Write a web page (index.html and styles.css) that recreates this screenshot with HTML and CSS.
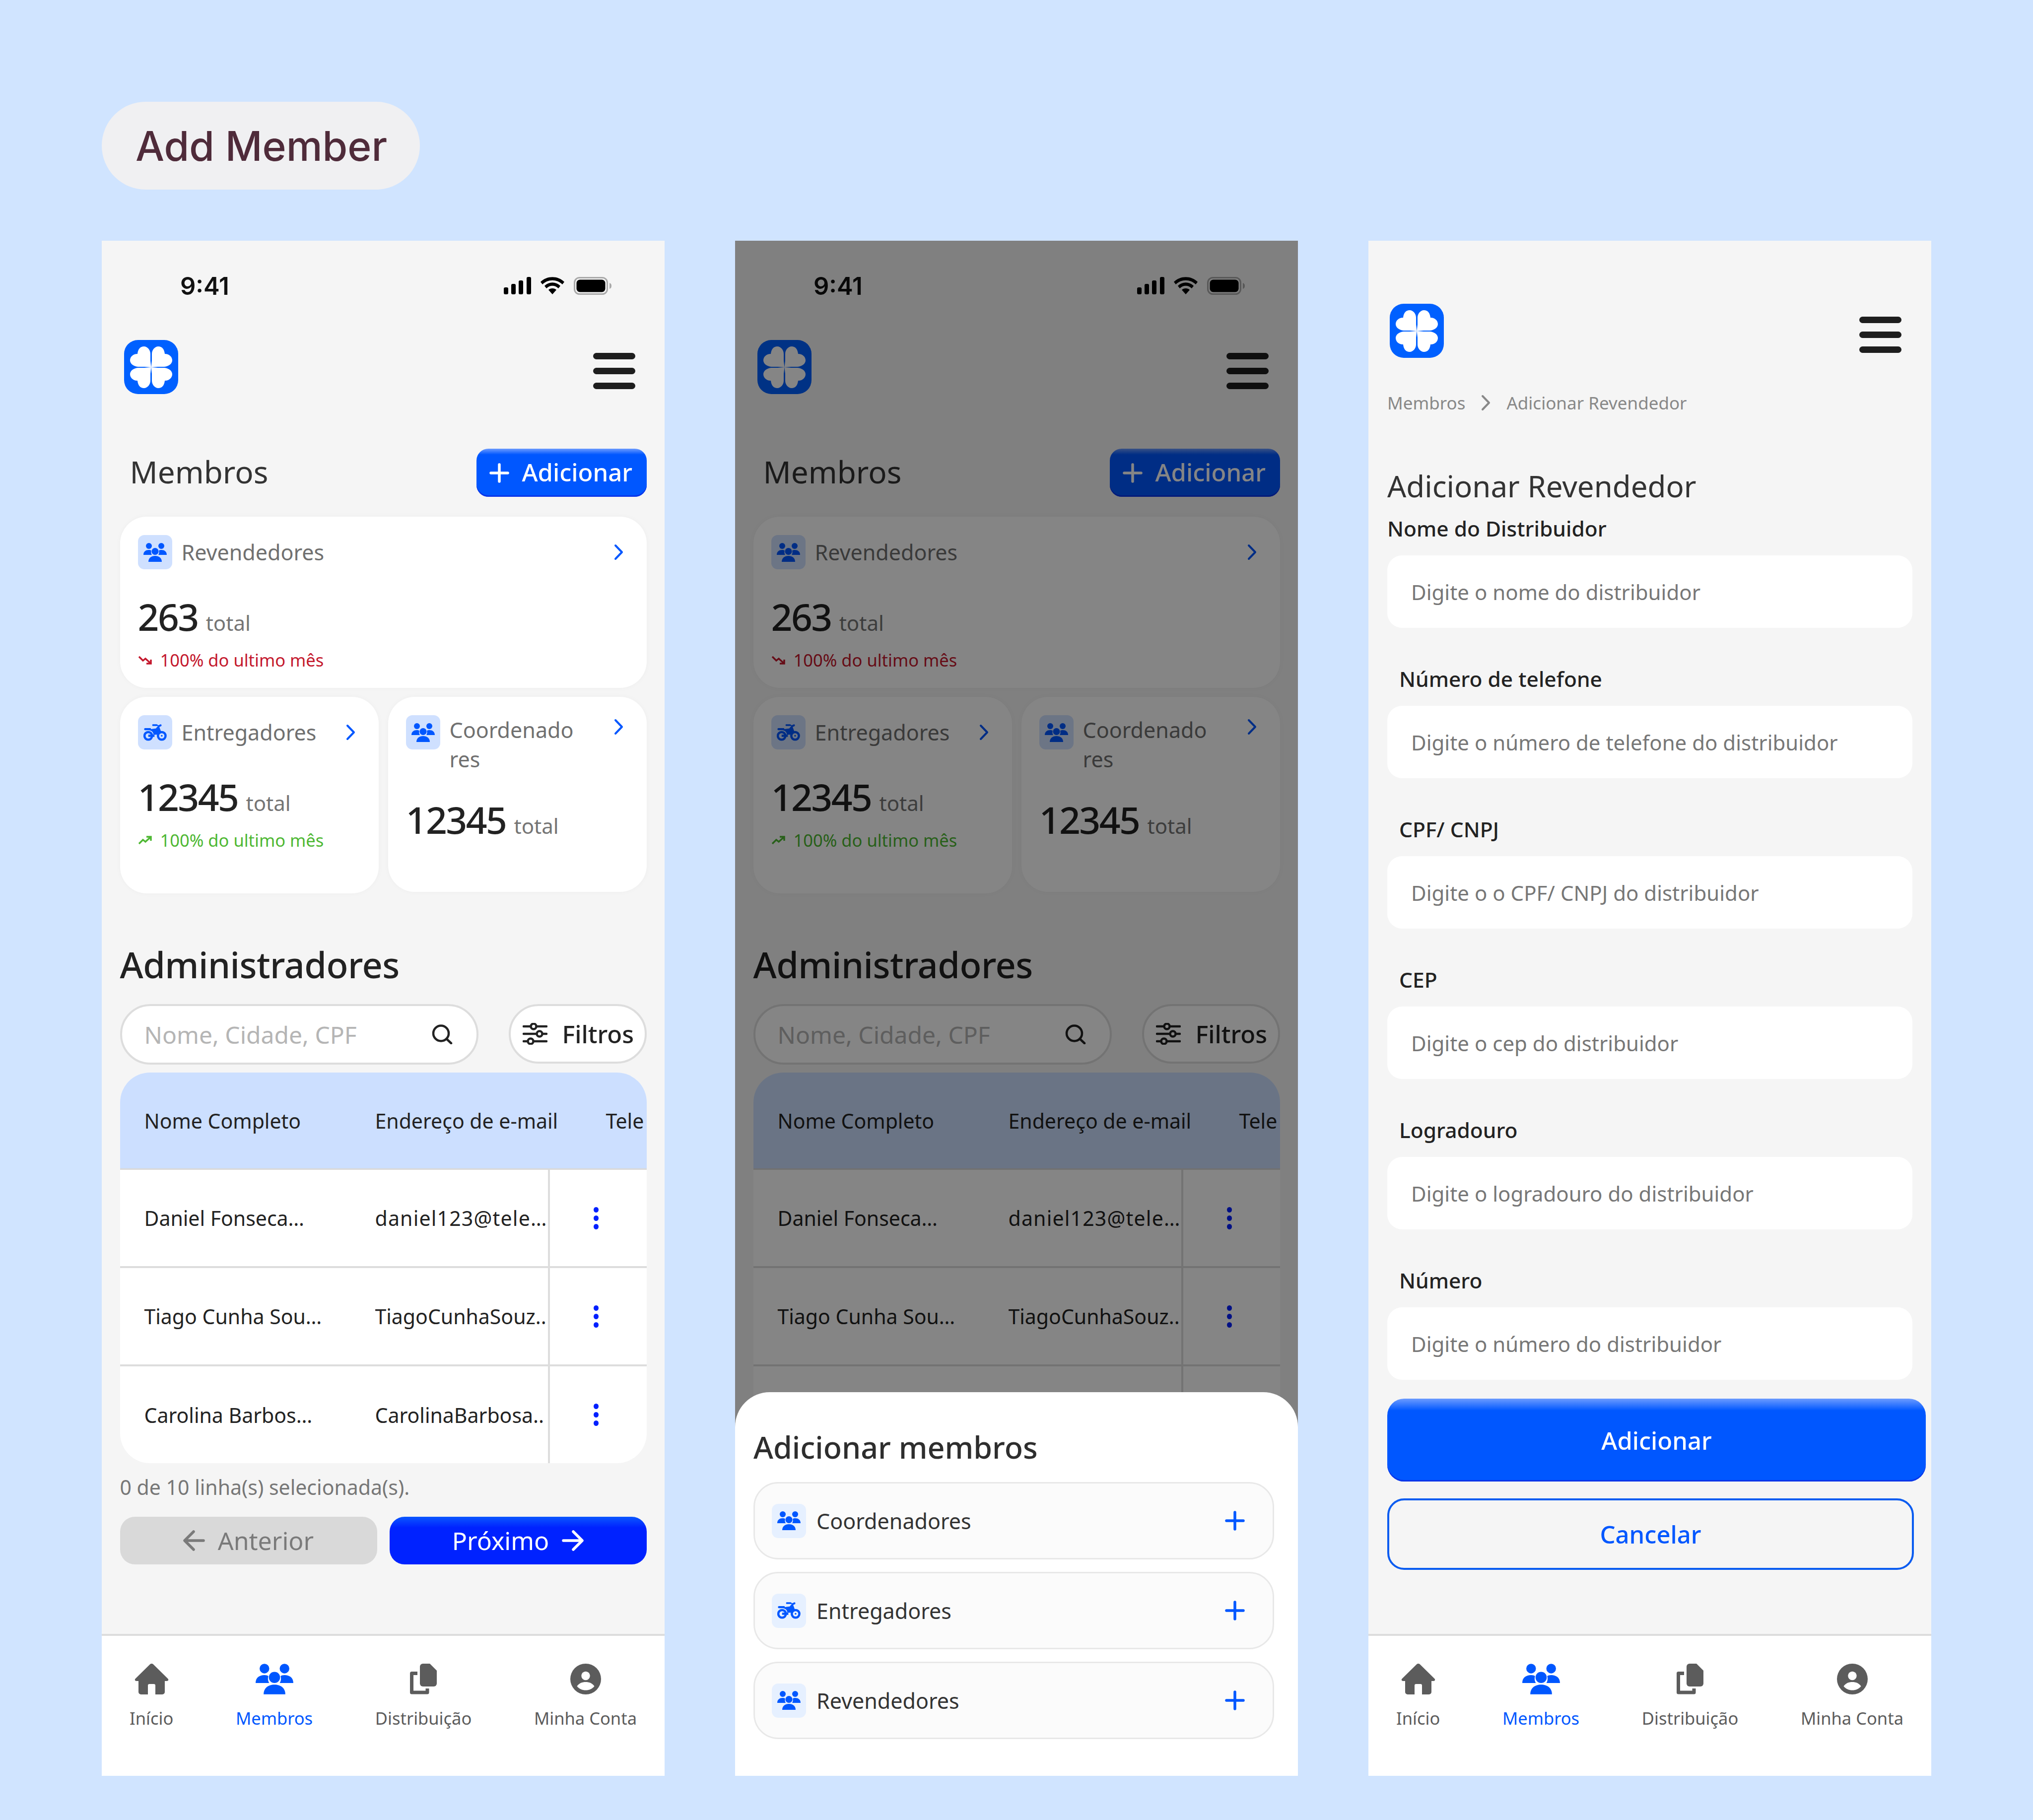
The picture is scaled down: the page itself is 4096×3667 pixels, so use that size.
FILE: index.html
```html
<!DOCTYPE html>
<html>
<head>
	<title>Add Member</title>
	<link rel="stylesheet" href="styles.css">
</head>
<body>
	<svg class="sprite">
		<symbol id="i-logo" viewBox="0 0 109 109">
			<rect width="109" height="109" rx="28" fill="#0060ff"/>
			<g fill="#fff">
				<path d="M54.5 55L53 42C53 36 53 33 53 28C53 20 47 13 40 13C33 13 28 18 27 28C18 28 12 34 12 41C12 48 19 53 28 54L41 54Z"/>
				<path d="M54.5 55L53 42C53 36 53 33 53 28C53 20 47 13 40 13C33 13 28 18 27 28C18 28 12 34 12 41C12 48 19 53 28 54L41 54Z" transform="translate(109 0) scale(-1 1)"/>
				<path d="M54.5 55L53 42C53 36 53 33 53 28C53 20 47 13 40 13C33 13 28 18 27 28C18 28 12 34 12 41C12 48 19 53 28 54L41 54Z" transform="translate(0 110) scale(1 -1)"/>
				<path d="M54.5 55L53 42C53 36 53 33 53 28C53 20 47 13 40 13C33 13 28 18 27 28C18 28 12 34 12 41C12 48 19 53 28 54L41 54Z" transform="translate(109 110) scale(-1 -1)"/>
			</g>
		</symbol>
		<symbol id="i-people" viewBox="0 0 47 38">
			<circle cx="11" cy="6" r="6"/>
			<circle cx="36" cy="6" r="6"/>
			<circle cx="23.500" cy="17" r="7"/>
			<path d="M0 24C0 17 5 14 11 14C13 14 15 14.500 16 15.500C14.800 18 15.500 22 17 24Z"/>
			<path d="M47 24C47 17 42 14 36 14C34 14 32 14.500 31 15.500C32.200 18 31.500 22 30 24Z"/>
			<path d="M10 38C10 30 16 26 23.500 26C31 26 37 30 37 38Z"/>
		</symbol>
		<symbol id="i-moto" viewBox="0 0 135 96">
			<circle cx="28" cy="67" r="22" fill="none" stroke="currentColor" stroke-width="13"/>
			<circle cx="106" cy="67" r="22" fill="none" stroke="currentColor" stroke-width="13"/>
			<circle cx="106" cy="67" r="5"/>
			<path d="M28 60H64V73H28Z"/>
			<path d="M10 22H42L44 28L72 24L84 10H54C50 10 50 0 54 0H76C80 0 83 3 85 6L100 0C104-1 107 9 103 11L92 16L102 42C92 42 84 48 80 60H58C58 44 46 34 30 34H10C2 34 2 22 10 22Z"/>
		</symbol>
		<symbol id="i-chev" viewBox="0 0 19 33">
			<path d="M3 3L16 16.500L3 30" fill="none" stroke="currentColor" stroke-width="4" stroke-linecap="round" stroke-linejoin="round"/>
		</symbol>
		<symbol id="i-plus" viewBox="0 0 40 40">
			<path d="M20 3V37M3 20H37" fill="none" stroke="currentColor" stroke-width="5.500" stroke-linecap="round"/>
		</symbol>
		<symbol id="i-home" viewBox="0 0 69 62">
			<path d="M31 1.500a5 5 0 0 1 7 0L67 30c2.500 2.500 1 5-2 5h-4v22a5 5 0 0 1-5 5H42V44a3 3 0 0 0-3-3H30a3 3 0 0 0-3 3v18H13a5 5 0 0 1-5-5V35H4c-3 0-4.500-2.500-2-5z"/>
		</symbol>
		<symbol id="i-docs" viewBox="0 0 54 62">
			<path d="M26 0H40L54 14V40a6 6 0 0 1-6 6H26a6 6 0 0 1-6-6V6a6 6 0 0 1 6-6z"/>
			<path d="M15 19.500H3.500V58H35V50" fill="none" stroke="currentColor" stroke-width="7" stroke-linejoin="round"/>
		</symbol>
		<symbol id="i-user" viewBox="0 0 62 62">
			<circle cx="31" cy="31" r="31"/>
			<circle cx="31" cy="24.500" r="8.700" fill="#fff"/>
			<path d="M13.500 45.500C18 39 24 37 31 37C38 37 44 39 48.500 45.500C44 51 38 53.500 31 53.500C24 53.500 18 51 13.500 45.500Z" fill="#fff"/>
		</symbol>
		<symbol id="i-search" viewBox="0 0 42 40">
			<circle cx="18.500" cy="18" r="15.500" fill="none" stroke="currentColor" stroke-width="4.500"/>
			<path d="M30 29.500L39 38" fill="none" stroke="currentColor" stroke-width="4.500" stroke-linecap="round"/>
		</symbol>
		<symbol id="i-sliders" viewBox="0 0 50 44">
			<g fill="none" stroke="currentColor" stroke-width="4.500" stroke-linecap="round">
				<path d="M2 7H16M28 7H48M2 22H28M40 22H48M2 37H10M22 37H48"/>
				<circle cx="22" cy="7" r="5.500"/>
				<circle cx="34" cy="22" r="5.500"/>
				<circle cx="16" cy="37" r="5.500"/>
			</g>
		</symbol>
		<symbol id="i-left" viewBox="0 0 44 44">
			<path d="M41 22H4M21 4L3 22L21 40" fill="none" stroke="currentColor" stroke-width="5.500" stroke-linecap="round" stroke-linejoin="round"/>
		</symbol>
		<symbol id="i-right" viewBox="0 0 44 44">
			<path d="M3 22H40M23 4L41 22L23 40" fill="none" stroke="currentColor" stroke-width="5.500" stroke-linecap="round" stroke-linejoin="round"/>
		</symbol>
		<symbol id="i-down" viewBox="0 0 28 20">
			<path d="M2 3L10 11L15 7L25 16M17 17H26V9" fill="none" stroke="currentColor" stroke-width="3.500"/>
		</symbol>
		<symbol id="i-up" viewBox="0 0 28 20">
			<path d="M2 17L10 9L15 13L25 4M17 3H26V11" fill="none" stroke="currentColor" stroke-width="3.500"/>
		</symbol>
		<symbol id="i-signal" viewBox="0 0 55 35">
			<rect x="0" y="21" width="9" height="14" rx="3"/>
			<rect x="15" y="14" width="9" height="21" rx="3"/>
			<rect x="30" y="7" width="9" height="28" rx="3"/>
			<rect x="46" y="0" width="9" height="35" rx="3"/>
		</symbol>
		<symbol id="i-wifi" viewBox="0 0 48 35">
			<path d="M0 10C13-3 35-3 48 10L44 15C33 4 15 4 4 15Z"/>
			<path d="M8 18C17 9 31 9 40 18L36 23C29 16 19 16 12 23Z"/>
			<path d="M16 26C20 22 28 22 32 26L24 35Z"/>
		</symbol>
		<symbol id="i-battery" viewBox="0 0 76 36">
			<rect x="1.500" y="1.500" width="66" height="33" rx="10" fill="none" stroke="#a9a9a9" stroke-width="3"/>
			<rect x="5.500" y="5.500" width="58" height="25" rx="7"/>
			<path d="M72 12C75 13 76 15 76 18C76 21 75 23 72 24Z" fill="#a9a9a9"/>
		</symbol>
	</svg>

	<div class="pill-row"><div class="pill">Add Member</div></div>

	<div class="phones">

		<div class="phone">
			<div class="status">
				<span class="clock">9:41</span>
				<div class="status-icons">
					<svg class="ic-signal"><use href="#i-signal"/></svg>
					<svg class="ic-wifi"><use href="#i-wifi"/></svg>
					<svg class="ic-battery"><use href="#i-battery"/></svg>
				</div>
			</div>
			<div class="topbar">
				<svg class="logo"><use href="#i-logo"/></svg>
				<div class="burger"><i></i><i></i><i></i></div>
			</div>
			<div class="content">
				<div class="section-head">
					<h2 class="section-title">Membros</h2>
					<div class="btn-add"><svg class="ic-add"><use href="#i-plus"/></svg><span>Adicionar</span></div>
				</div>
				<div class="card card-wide">
					<div class="card-head">
						<span class="tile"><svg class="ic-tile"><use href="#i-people"/></svg></span>
						<span class="card-title">Revendedores</span>
						<svg class="ic-chev"><use href="#i-chev"/></svg>
					</div>
					<div class="stat"><b>263</b><span>total</span></div>
					<div class="trend down"><svg class="ic-trend"><use href="#i-down"/></svg>100% do ultimo mês</div>
				</div>
				<div class="card-row">
					<div class="card card-left">
						<div class="card-head">
							<span class="tile"><svg class="ic-tile"><use href="#i-moto"/></svg></span>
							<span class="card-title">Entregadores</span>
							<svg class="ic-chev"><use href="#i-chev"/></svg>
						</div>
						<div class="stat"><b>12345</b><span>total</span></div>
						<div class="trend up"><svg class="ic-trend"><use href="#i-up"/></svg>100% do ultimo mês</div>
					</div>
					<div class="card card-right">
						<div class="card-head top">
							<span class="tile"><svg class="ic-tile"><use href="#i-people"/></svg></span>
							<span class="card-title wrap">Coordenado<br>res</span>
							<svg class="ic-chev"><use href="#i-chev"/></svg>
						</div>
						<div class="stat low"><b>12345</b><span>total</span></div>
					</div>
				</div>
				<h2 class="admin-title">Administradores</h2>
				<div class="search-row">
					<div class="search"><span>Nome, Cidade, CPF</span><svg class="ic-search"><use href="#i-search"/></svg></div>
					<div class="filter"><svg class="ic-sliders"><use href="#i-sliders"/></svg>Filtros</div>
				</div>
				<div class="table">
					<div class="tr thead"><div>Nome Completo</div><div class="wide">Endereço de e-mail</div><div class="cut">Tele</div></div>
					<div class="tr"><div>Daniel Fonseca…</div><div class="loose">daniel123@tele…</div><div class="more"><i></i><i></i><i></i></div></div>
					<div class="tr"><div>Tiago Cunha Sou…</div><div>TiagoCunhaSouz..</div><div class="more"><i></i><i></i><i></i></div></div>
					<div class="tr last"><div>Carolina Barbos…</div><div>CarolinaBarbosa..</div><div class="more"><i></i><i></i><i></i></div></div>
				</div>
				<div class="selected-note">0 de 10 linha(s) selecionada(s).</div>
				<div class="pager">
					<div class="page-btn prev"><svg class="ic-arrow"><use href="#i-left"/></svg>Anterior</div>
					<div class="page-btn next">Próximo<svg class="ic-arrow"><use href="#i-right"/></svg></div>
				</div>
			</div>
			<div class="nav">
				<div class="nav-item"><svg class="ic-home"><use href="#i-home"/></svg><span>Início</span></div>
				<div class="nav-item active"><svg class="ic-members"><use href="#i-people"/></svg><span>Membros</span></div>
				<div class="nav-item"><svg class="ic-docs"><use href="#i-docs"/></svg><span>Distribuição</span></div>
				<div class="nav-item"><svg class="ic-user"><use href="#i-user"/></svg><span>Minha Conta</span></div>
			</div>
		</div>

		<div class="phone">
			<div class="status">
				<span class="clock">9:41</span>
				<div class="status-icons">
					<svg class="ic-signal"><use href="#i-signal"/></svg>
					<svg class="ic-wifi"><use href="#i-wifi"/></svg>
					<svg class="ic-battery"><use href="#i-battery"/></svg>
				</div>
			</div>
			<div class="topbar">
				<svg class="logo"><use href="#i-logo"/></svg>
				<div class="burger"><i></i><i></i><i></i></div>
			</div>
			<div class="content">
				<div class="section-head">
					<h2 class="section-title">Membros</h2>
					<div class="btn-add"><svg class="ic-add"><use href="#i-plus"/></svg><span>Adicionar</span></div>
				</div>
				<div class="card card-wide">
					<div class="card-head">
						<span class="tile"><svg class="ic-tile"><use href="#i-people"/></svg></span>
						<span class="card-title">Revendedores</span>
						<svg class="ic-chev"><use href="#i-chev"/></svg>
					</div>
					<div class="stat"><b>263</b><span>total</span></div>
					<div class="trend down"><svg class="ic-trend"><use href="#i-down"/></svg>100% do ultimo mês</div>
				</div>
				<div class="card-row">
					<div class="card card-left">
						<div class="card-head">
							<span class="tile"><svg class="ic-tile"><use href="#i-moto"/></svg></span>
							<span class="card-title">Entregadores</span>
							<svg class="ic-chev"><use href="#i-chev"/></svg>
						</div>
						<div class="stat"><b>12345</b><span>total</span></div>
						<div class="trend up"><svg class="ic-trend"><use href="#i-up"/></svg>100% do ultimo mês</div>
					</div>
					<div class="card card-right">
						<div class="card-head top">
							<span class="tile"><svg class="ic-tile"><use href="#i-people"/></svg></span>
							<span class="card-title wrap">Coordenado<br>res</span>
							<svg class="ic-chev"><use href="#i-chev"/></svg>
						</div>
						<div class="stat low"><b>12345</b><span>total</span></div>
					</div>
				</div>
				<h2 class="admin-title">Administradores</h2>
				<div class="search-row">
					<div class="search"><span>Nome, Cidade, CPF</span><svg class="ic-search"><use href="#i-search"/></svg></div>
					<div class="filter"><svg class="ic-sliders"><use href="#i-sliders"/></svg>Filtros</div>
				</div>
				<div class="table">
					<div class="tr thead"><div>Nome Completo</div><div class="wide">Endereço de e-mail</div><div class="cut">Tele</div></div>
					<div class="tr"><div>Daniel Fonseca…</div><div class="loose">daniel123@tele…</div><div class="more"><i></i><i></i><i></i></div></div>
					<div class="tr"><div>Tiago Cunha Sou…</div><div>TiagoCunhaSouz..</div><div class="more"><i></i><i></i><i></i></div></div>
					<div class="tr last"><div></div><div></div><div class="more"></div></div>
				</div>
			</div>
			<div class="overlay"></div>
			<div class="sheet">
				<h2 class="sheet-title">Adicionar membros</h2>
				<div class="sheet-item">
					<span class="tile light"><svg class="ic-tile"><use href="#i-people"/></svg></span>
					<span class="sheet-label">Coordenadores</span>
					<svg class="ic-plus"><use href="#i-plus"/></svg>
				</div>
				<div class="sheet-item">
					<span class="tile light"><svg class="ic-tile"><use href="#i-moto"/></svg></span>
					<span class="sheet-label">Entregadores</span>
					<svg class="ic-plus"><use href="#i-plus"/></svg>
				</div>
				<div class="sheet-item">
					<span class="tile light"><svg class="ic-tile"><use href="#i-people"/></svg></span>
					<span class="sheet-label">Revendedores</span>
					<svg class="ic-plus"><use href="#i-plus"/></svg>
				</div>
			</div>
		</div>

		<div class="phone">
			<div class="topbar form-top">
				<svg class="logo"><use href="#i-logo"/></svg>
				<div class="burger"><i></i><i></i><i></i></div>
			</div>
			<div class="form">
				<div class="crumbs"><span>Membros</span><svg class="ic-chev"><use href="#i-chev"/></svg><span>Adicionar Revendedor</span></div>
				<h2 class="form-title">Adicionar Revendedor</h2>
				<div class="label first">Nome do Distribuidor</div>
				<div class="input">Digite o nome do distribuidor</div>
				<div class="label">Número de telefone</div>
				<div class="input">Digite o número de telefone do distribuidor</div>
				<div class="label">CPF/ CNPJ</div>
				<div class="input">Digite o o CPF/ CNPJ do distribuidor</div>
				<div class="label">CEP</div>
				<div class="input">Digite o cep do distribuidor</div>
				<div class="label">Logradouro</div>
				<div class="input">Digite o logradouro do distribuidor</div>
				<div class="label">Número</div>
				<div class="input">Digite o número do distribuidor</div>
				<div class="btn-submit">Adicionar</div>
				<div class="btn-cancel">Cancelar</div>
			</div>
			<div class="nav">
				<div class="nav-item"><svg class="ic-home"><use href="#i-home"/></svg><span>Início</span></div>
				<div class="nav-item active"><svg class="ic-members"><use href="#i-people"/></svg><span>Membros</span></div>
				<div class="nav-item"><svg class="ic-docs"><use href="#i-docs"/></svg><span>Distribuição</span></div>
				<div class="nav-item"><svg class="ic-user"><use href="#i-user"/></svg><span>Minha Conta</span></div>
			</div>
		</div>

	</div>
</body>
</html>
```
FILE: styles.css
```css
*{
	box-sizing: border-box;
}

html, body{
	margin: 0;
	background-color: #d0e4ff;
	font-family: "Noto Sans", sans-serif;
	color: #222;
}

body{
	width: 4096px;
	height: 3667px;
	padding: 205px 0 0 205px;
	overflow: hidden;
}

h2{
	margin: 0;
	font-weight: 400;
}

.sprite{
	display: none;
}

svg{
	display: block;
	flex: none;
	fill: currentColor;
}

.pill-row{
	display: flex;
	height: 280px;
}

.pill{
	height: 177px;
	padding: 2px 66px 0 68px;
	border-radius: 89px;
	background-color: #f0f0f2;
	color: #4f2b3a;
	font-family: Inter, sans-serif;
	font-size: 82px;
	font-weight: 500;
	line-height: 175px;
}

.phones{
	display: flex;
	gap: 142px;
}

.phone{
	position: relative;
	display: flex;
	flex-direction: column;
	width: 1134px;
	height: 3093px;
	background-color: #f5f5f5;
	overflow: hidden;
}

/* status bar */
.status{
	display: flex;
	justify-content: space-between;
	align-items: center;
	height: 36px;
	margin-top: 73px;
	padding: 0 107px 0 158px;
}

.clock{
	font-family: Inter, sans-serif;
	font-size: 49px;
	font-weight: 600;
	color: #111;
}

.status-icons{
	display: flex;
	gap: 19px;
	color: #000;
}

.ic-signal{ width: 55px; height: 35px; }
.ic-wifi{ width: 48px; height: 35px; }
.ic-battery{ width: 76px; height: 36px; }

/* top bar */
.topbar{
	display: flex;
	justify-content: space-between;
	align-items: flex-start;
	margin-top: 91px;
	padding: 0 59px 0 45px;
}

.form-top{
	margin-top: 127px;
	padding: 0 60px 0 43px;
}

.logo{
	width: 109px;
	height: 109px;
}

.burger{
	display: flex;
	flex-direction: column;
	gap: 17px;
	width: 85px;
	margin-top: 26px;
}

.burger i{
	display: block;
	height: 13px;
	border-radius: 7px;
	background-color: #1e1e1e;
}

.content{
	padding: 0 36.5px;
}

.section-head{
	display: flex;
	justify-content: space-between;
	align-items: center;
	margin-top: 110px;
	padding-left: 20px;
}

.section-title{
	padding-bottom: 5px;
	font-size: 62px;
	color: #333;
}

.btn-add{
	display: flex;
	align-items: center;
	gap: 26px;
	width: 343px;
	height: 97px;
	padding-left: 26px;
	border-radius: 24px;
	background: linear-gradient(#6c9bff, #0057ff 12px);
	box-shadow: inset 0 -3px 0 #0a35e8;
	color: #fff;
	font-size: 49px;
	font-weight: 500;
}

.btn-add span{
	padding-bottom: 4px;
}

.ic-add{
	width: 40px;
	height: 40px;
}

/* cards */
.card{
	border-radius: 54px;
	background-color: #fff;
	box-shadow: 0 0 12px rgba(0, 0, 0, 0.03);
	padding: 37px 47px 37px 36px;
}

.card-wide{
	height: 345px;
	margin-top: 40px;
}

.card-row{
	display: flex;
	align-items: flex-start;
	gap: 19px;
	margin-top: 18px;
}

.card-left{
	width: 521px;
	height: 396px;
}

.card-right{
	width: 521px;
	height: 393px;
}

.card-head{
	display: flex;
	align-items: center;
	gap: 19px;
	color: #707070;
}

.card-head .ic-chev{
	margin-left: auto;
	color: #0057ff;
}

.card-head.top{
	align-items: flex-start;
}

.card-head.top .ic-chev{
	margin-top: 7px;
}

.tile{
	display: flex;
	align-items: center;
	justify-content: center;
	flex: none;
	width: 69px;
	height: 69px;
	border-radius: 13px;
	background-color: #cfe0ff;
	color: #0057ff;
}

.tile.light{
	background-color: #e6f0ff;
}

.ic-tile{
	width: 47px;
	height: 38px;
}

.ic-chev{
	width: 19px;
	height: 33px;
}

.card-title{
	font-size: 43px;
}

.card-title.wrap{
	line-height: 59px;
}

.stat{
	display: flex;
	align-items: baseline;
	gap: 16px;
	height: 100px;
	margin-top: 45px;
	line-height: 100px;
}

.stat b{
	font-size: 75px;
	font-weight: 500;
	letter-spacing: -2.5px;
	color: #222;
}

.stat span{
	font-size: 42px;
	color: #757575;
}

.stat.low{
	margin-top: 42px;
}

.trend{
	display: flex;
	align-items: center;
	gap: 17px;
	margin-top: 13px;
	font-size: 34.5px;
	line-height: 50px;
}

.trend.down{ color: #c4182d; }
.trend.up{ color: #4eb833; }

.ic-trend{
	width: 28px;
	height: 20px;
}

.admin-title{
	height: 100px;
	margin-top: 93px;
	font-size: 72px;
	font-weight: 500;
	letter-spacing: -0.5px;
	line-height: 100px;
}

.search-row{
	display: flex;
	justify-content: space-between;
	margin-top: 30px;
}

.search{
	display: flex;
	align-items: center;
	justify-content: space-between;
	width: 722px;
	height: 122px;
	padding: 0 48px 0 45px;
	border: 4px solid #ddd;
	border-radius: 61px;
	background-color: #fff;
	color: #b5b5b5;
	font-size: 48px;
}

.ic-search{
	width: 42px;
	height: 40px;
	color: #222;
}

.filter{
	display: flex;
	align-items: center;
	gap: 30px;
	width: 278px;
	height: 120px;
	padding-left: 24px;
	border: 4px solid #ddd;
	border-radius: 60px;
	background-color: #fff;
	font-size: 49px;
	font-weight: 500;
}

.ic-sliders{
	width: 50px;
	height: 44px;
}

/* table */
.table{
	margin-top: 16px;
	border-radius: 60px;
	background-color: #fff;
	overflow: hidden;
	font-size: 41px;
}

.tr{
	display: grid;
	grid-template-columns: 514px 348px 199px;
	height: 198px;
	border-bottom: 4px solid #ddd;
}

.tr > div{
	display: flex;
	align-items: center;
	padding-left: 49px;
	white-space: nowrap;
	overflow: hidden;
}

.tr > div:nth-child(2){
	padding-left: 0;
}

.tr > div.wide{
	overflow: visible;
}

.tr > div.loose{
	letter-spacing: 1.2px;
}

.tr.thead{
	height: 196px;
	background-color: #ccdfff;
	border-bottom: 3px solid #d9d9d9;
}

.tr.last{
	height: 195px;
	border-bottom: 0;
}

.tr > div.cut{
	padding-left: 117px;
}

.tr > div.more{
	flex-direction: column;
	justify-content: center;
	gap: 6px;
	padding: 0 8px 0 0;
	border-left: 4px solid #ddd;
}

.more i{
	display: block;
	width: 10px;
	height: 11px;
	border-radius: 50%;
	background-color: #0020ff;
}

.selected-note{
	height: 56px;
	margin-top: 20px;
	color: #777;
	font-size: 41px;
	line-height: 56px;
}

.pager{
	display: flex;
	justify-content: space-between;
	margin-top: 32px;
}

.page-btn{
	display: flex;
	align-items: center;
	justify-content: center;
	gap: 26px;
	width: 518px;
	height: 96px;
	border-radius: 30px;
	font-size: 50px;
}

.page-btn.prev{
	background-color: #d9d9d9;
	color: #7a7a7a;
}

.page-btn.next{
	background: linear-gradient(#0b57ff, #0022ff 22px);
	color: #fff;
}

.ic-arrow{
	width: 44px;
	height: 44px;
}

/* bottom nav */
.nav{
	display: flex;
	justify-content: space-between;
	height: 286px;
	margin-top: auto;
	padding: 56px 56px 0;
	border-top: 4px solid #ddd;
	background-color: #fff;
	color: #5c5c5c;
}

.nav-item{
	display: flex;
	flex-direction: column;
	align-items: center;
	font-size: 34.5px;
	line-height: 48px;
}

.nav-item svg{
	height: 62px;
}

.nav-item span{
	margin-top: 24px;
}

.nav-item.active{
	color: #0057ff;
}

.ic-home{ width: 69px; }
.ic-members{ width: 76px; }
.ic-docs{ width: 54px; }
.ic-user{ width: 62px; }

/* dim layer and bottom sheet */
.overlay{
	position: absolute;
	top: 0;
	left: 0;
	right: 0;
	bottom: 0;
	background-color: rgba(0, 0, 0, 0.48);
}

.sheet{
	position: absolute;
	left: 0;
	right: 0;
	bottom: 0;
	height: 773px;
	padding: 71px 48px 0 37px;
	border-radius: 70px 70px 0 0;
	background-color: #fff;
}

.sheet-title{
	height: 80px;
	color: #2e2e2e;
	font-size: 61px;
	font-weight: 500;
	line-height: 80px;
}

.sheet-item{
	display: flex;
	align-items: center;
	gap: 21px;
	height: 156px;
	margin-top: 25px;
	padding: 0 56px 0 34px;
	border: 3px solid #e8e8e8;
	border-radius: 50px;
	background-color: #fbfbfb;
	color: #333;
	font-size: 43px;
}

.sheet-title + .sheet-item{
	margin-top: 30px;
}

.ic-plus{
	width: 40px;
	height: 40px;
	margin-left: auto;
	color: #0057ff;
}

/* form */
.form{
	padding-left: 38px;
}

.crumbs{
	display: flex;
	align-items: center;
	gap: 32px;
	height: 40px;
	margin-top: 70px;
	color: #888;
	font-size: 35px;
}

.form-title{
	height: 80px;
	margin-top: 108px;
	color: #333;
	font-size: 60px;
	line-height: 80px;
}

.label{
	height: 60px;
	margin-top: 73px;
	padding-left: 24px;
	font-size: 42.5px;
	font-weight: 500;
	line-height: 60px;
}

.label.first{
	margin-top: 16px;
	padding-left: 0;
}

.input{
	display: flex;
	align-items: center;
	width: 1058px;
	height: 146px;
	margin-top: 24px;
	padding-left: 48px;
	border-radius: 30px;
	background-color: #fff;
	color: #777;
	font-size: 42px;
}

.btn-submit{
	display: flex;
	align-items: center;
	justify-content: center;
	width: 1085px;
	height: 167px;
	margin-top: 38px;
	border-radius: 34px;
	background: linear-gradient(#6c9bff, #0057ff 24px);
	box-shadow: inset 0 -3px 0 #0a35e8;
	color: #fff;
	font-size: 49px;
	font-weight: 500;
}

.btn-cancel{
	display: flex;
	align-items: center;
	justify-content: center;
	width: 1061px;
	height: 144px;
	margin-top: 34px;
	border: 4px solid #0a5cf0;
	border-radius: 34px;
	color: #0057ff;
	font-size: 49px;
	font-weight: 500;
}
```
